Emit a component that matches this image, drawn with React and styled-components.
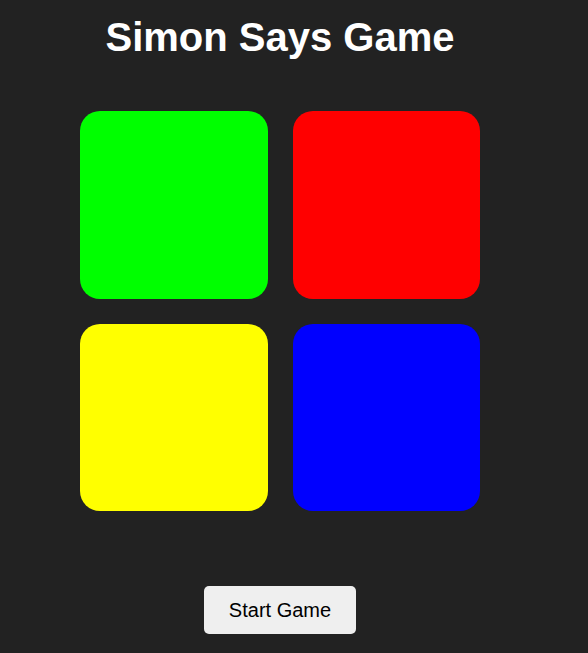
import React from "react";
import styled, { createGlobalStyle } from "styled-components";

const GlobalStyle = createGlobalStyle`
  html, body {
    margin: 0;
    padding: 0;
    background: #222222;
  }
  body {
    font-family: "Liberation Sans", Arial, sans-serif;
  }
`;

const Page = styled.div`
  width: 560px;
  display: flex;
  flex-direction: column;
  align-items: center;
  padding-top: 14px;
`;

const Title = styled.h1`
  margin: 0;
  color: #ffffff;
  font-size: 40px;
  font-weight: bold;
  line-height: 46px;
`;

const Board = styled.div`
  margin-top: 51px;
  width: 400px;
  height: 400px;
  display: grid;
  grid-template-columns: repeat(2, 1fr);
  grid-template-rows: repeat(2, 1fr);
  gap: 25px;
`;

const Pad = styled.button`
  border: none;
  padding: 0;
  border-radius: 20px;
  background: ${(p) => p.$color};
  cursor: pointer;
`;

const StartButton = styled.button`
  margin-top: 75px;
  border: none;
  border-radius: 5px;
  background: #efefef;
  color: #000000;
  font-family: "Liberation Sans", Arial, sans-serif;
  font-size: 20px;
  line-height: 24px;
  padding: 12px 25px;
  cursor: pointer;
`;

const colors = ["#00ff00", "#ff0000", "#ffff00", "#0000ff"];

export default function App() {
  return (
    <>
      <GlobalStyle />
      <Page>
        <Title>Simon Says Game</Title>
        <Board>
          {colors.map((c) => (
            <Pad key={c} $color={c} aria-label={c} />
          ))}
        </Board>
        <StartButton>Start Game</StartButton>
      </Page>
    </>
  );
}
